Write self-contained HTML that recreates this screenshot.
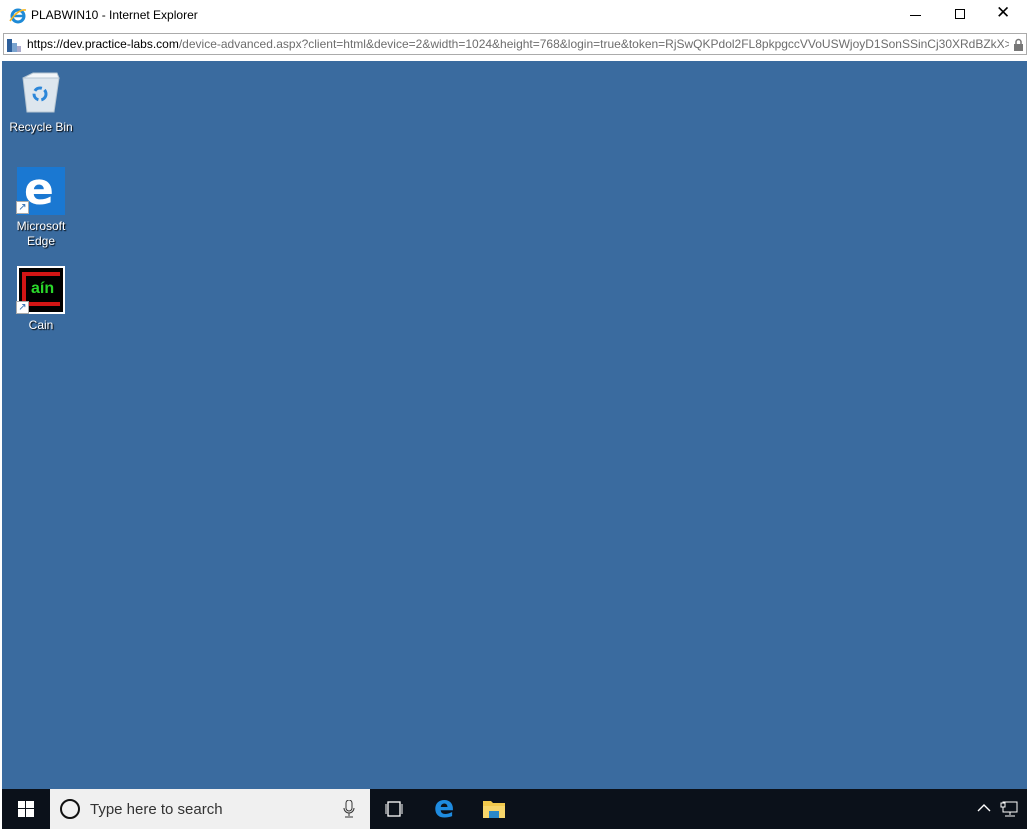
<!DOCTYPE html>
<html><head><meta charset="utf-8"><style>
*{margin:0;padding:0;box-sizing:border-box}
body{width:1030px;height:833px;background:#fff;position:relative;overflow:hidden;font-family:"Liberation Sans",sans-serif}
.abs{position:absolute}
.title{left:31px;top:8px;font-size:12px;color:#000}
.addr{left:3px;top:33px;width:1024px;height:22px;border:1px solid #ababab;background:#fff}
.url{left:27px;top:37px;font-size:12px;color:#6d6d6d;white-space:nowrap;width:982px;overflow:hidden}
.url b{font-weight:normal;color:#000}
.desk{left:2px;top:61px;width:1025px;height:728px;background:#3a6b9f}
.lbl{color:#fff;font-size:12px;text-align:center;width:80px;text-shadow:1px 1px 1px #000;line-height:15px}
.tb{left:2px;top:789px;width:1025px;height:40px;background:#0b111a}
.search{left:50px;top:789px;width:320px;height:40px;background:#f0f0f0}
</style></head><body>
<svg class="abs" style="left:9px;top:7px" width="18" height="18" viewBox="0 0 18 18"><circle cx="9" cy="9" r="6" fill="none" stroke="#1e8ad6" stroke-width="3"/><path d="M4 9h10" stroke="#1e8ad6" stroke-width="2.5"/><path d="M1 14 Q9 2 17 3" stroke="#f5b622" stroke-width="1.6" fill="none"/></svg>
<div class="abs title">PLABWIN10 - Internet Explorer</div>
<div class="abs" style="left:910px;top:15px;width:11px;height:1px;background:#000"></div>
<div class="abs" style="left:955px;top:9px;width:10px;height:10px;border:1px solid #000"></div>
<div class="abs" style="left:996px;top:3px;font-size:17px">✕</div>
<div class="abs addr"></div>
<svg class="abs" style="left:7px;top:37px" width="14" height="15"><rect x="0" y="2" width="5" height="13" fill="#2d5f9b"/><rect x="5" y="6" width="5" height="9" fill="#7aa4cf"/><rect x="10" y="9" width="4" height="6" fill="#aac"/></svg>
<div class="abs url"><b>https://dev.</b><b>practice-labs.com</b>/device-advanced.aspx?client=html&amp;device=2&amp;width=1024&amp;height=768&amp;login=true&amp;token=RjSwQKPdol2FL8pkpgccVVoUSWjoyD1SonSSinCj30XRdBZkX&gt;</div>
<svg class="abs" style="left:1013px;top:38px" width="11" height="13"><path d="M3 6V4a2.5 2.5 0 0 1 5 0v2" fill="none" stroke="#777" stroke-width="1.5"/><rect x="1" y="6" width="9" height="7" fill="#777"/></svg>
<div class="abs desk"></div>
<svg class="abs" style="left:21px;top:70px" width="40" height="45" viewBox="0 0 40 45"><path d="M2 8 L6 42 H33 L38 8 Z" fill="#dde6ee" stroke="#b7c6d2"/><path d="M2 8 L12 3 H36 L38 8Z" fill="#f3f6f9" stroke="#b7c6d2"/><circle cx="19" cy="24" r="6" fill="none" stroke="#2b86d9" stroke-width="3" stroke-dasharray="8 3"/></svg>
<div class="abs lbl" style="left:1px;top:120px">Recycle Bin</div>
<div class="abs" style="left:17px;top:167px;width:48px;height:48px;background:#1a78d2"></div>
<div class="abs" style="left:24px;top:168px;font-size:44px;font-weight:bold;color:#fff;font-family:'DejaVu Sans',sans-serif;line-height:44px">e</div>
<div class="abs" style="left:16px;top:201px;width:13px;height:13px;background:#fff;border:1px solid #aaa;color:#2a6ab0;font-size:10px;line-height:11px;text-align:center">↗</div>
<div class="abs lbl" style="left:1px;top:219px">Microsoft<br>Edge</div>
<div class="abs" style="left:17px;top:266px;width:48px;height:48px;background:#000;border:2px solid #fff"></div>
<div class="abs" style="left:22px;top:272px;width:38px;height:34px;border:4px solid #d21515;border-right:none"></div>
<div class="abs" style="left:31px;top:280px;font-size:16px;font-weight:bold;color:#2ad62a">aín</div>
<div class="abs" style="left:16px;top:301px;width:13px;height:13px;background:#fff;border:1px solid #aaa;color:#2a6ab0;font-size:10px;line-height:11px;text-align:center">↗</div>
<div class="abs lbl" style="left:1px;top:318px">Cain</div>
<div class="abs tb"></div>
<svg class="abs" style="left:18px;top:801px" width="16" height="16"><rect x="0" y="0" width="7" height="7" fill="#fff"/><rect x="8" y="0" width="8" height="7" fill="#fff"/><rect x="0" y="8" width="7" height="8" fill="#fff"/><rect x="8" y="8" width="8" height="8" fill="#fff"/></svg>
<div class="abs search"></div>
<div class="abs" style="left:60px;top:799px;width:20px;height:20px;border:2.5px solid #111;border-radius:50%"></div>
<div class="abs" style="left:90px;top:801px;font-size:15px;color:#333">Type here to search</div>
<svg class="abs" style="left:343px;top:800px" width="12" height="18"><rect x="3" y="0" width="6" height="11" rx="3" fill="none" stroke="#333"/><path d="M1 8a5 5 0 0 0 10 0M6 13v3M2 17h8" fill="none" stroke="#333"/></svg>
<svg class="abs" style="left:384px;top:801px" width="20" height="16"><rect x="4" y="1" width="12" height="14" fill="none" stroke="#fff" stroke-width="1.3"/><path d="M2 3v10M18 3v10" stroke="#fff"/></svg>
<div class="abs" style="left:434px;top:790px;font-size:30px;font-weight:bold;color:#1e8be0;font-family:'DejaVu Sans',sans-serif">e</div>
<svg class="abs" style="left:483px;top:799px" width="22" height="20"><path d="M0 2h8l2 2h12v15H0z" fill="#f2c94c"/><rect x="0" y="7" width="22" height="12" fill="#f7d66b"/><rect x="6" y="12" width="10" height="7" fill="#2a88c8"/></svg>
<svg class="abs" style="left:977px;top:803px" width="14" height="10"><path d="M1 8l6-6 6 6" fill="none" stroke="#fff" stroke-width="1.4"/></svg>
<svg class="abs" style="left:1000px;top:801px" width="18" height="16"><rect x="3" y="1" width="14" height="10" fill="none" stroke="#fff"/><rect x="1" y="2" width="4" height="4" fill="#0b111a" stroke="#fff"/><path d="M10 11v3M5 15h10" stroke="#fff"/></svg>
</body></html>
